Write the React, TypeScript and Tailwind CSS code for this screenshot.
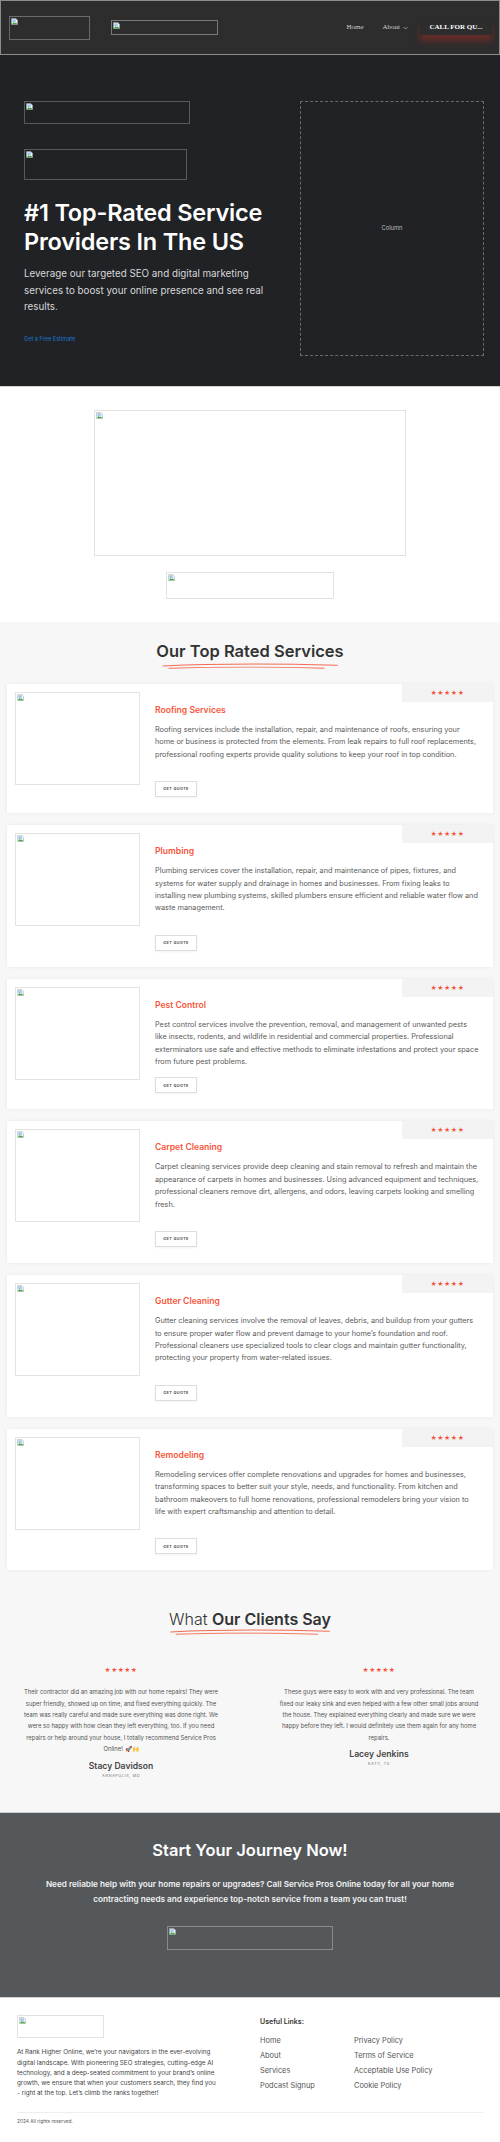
import React from "react";

function BrokenIcon() {
  return (
    <svg width="7" height="7" viewBox="0 0 16 16" className="absolute left-[1px] top-[1px]">
      <path d="M1 1h10l4 4v10H1z" fill="#f4f4f4" stroke="#9a9a9a" strokeWidth="1" />
      <rect x="3" y="3" width="8" height="6" fill="#9cc9ee" />
      <path d="M2 14l4-5 3 3 2-2 4 4z" fill="#3aa84a" />
    </svg>
  );
}

function Img({ className }: { className: string }) {
  return (
    <div className={"relative shrink-0 border " + className}>
      <BrokenIcon />
    </div>
  );
}

function Swoosh({ className }: { className: string }) {
  return (
    <svg viewBox="0 0 180 8" preserveAspectRatio="none" className={className}>
      <path d="M2 4 C 50 1, 120 1, 178 3" stroke="#f36b52" strokeWidth="1.4" fill="none" strokeLinecap="round" />
      <path d="M8 7 C 60 5, 110 5, 165 7" stroke="#f36b52" strokeWidth="1.1" fill="none" strokeLinecap="round" />
    </svg>
  );
}

function Stars({ className }: { className: string }) {
  return <div className={"text-[#f5533d] tracking-[0.5px] leading-none " + className}>★★★★★</div>;
}

const services = [
  {
    title: "Roofing Services",
    text: "Roofing services include the installation, repair, and maintenance of roofs, ensuring your home or business is protected from the elements. From leak repairs to full roof replacements, professional roofing experts provide quality solutions to keep your roof in top condition.",
    btn: "mt-[20px]",
  },
  {
    title: "Plumbing",
    text: "Plumbing services cover the installation, repair, and maintenance of pipes, fixtures, and systems for water supply and drainage in homes and businesses. From fixing leaks to installing new plumbing systems, skilled plumbers ensure efficient and reliable water flow and waste management.",
    btn: "mt-[20px]",
  },
  {
    title: "Pest Control",
    text: "Pest control services involve the prevention, removal, and management of unwanted pests like insects, rodents, and wildlife in residential and commercial properties. Professional exterminators use safe and effective methods to eliminate infestations and protect your space from future pest problems.",
    btn: "mt-[9px]",
  },
  {
    title: "Carpet Cleaning",
    text: "Carpet cleaning services provide deep cleaning and stain removal to refresh and maintain the appearance of carpets in homes and businesses. Using advanced equipment and techniques, professional cleaners remove dirt, allergens, and odors, leaving carpets looking and smelling fresh.",
    btn: "mt-[20px]",
  },
  {
    title: "Gutter Cleaning",
    text: "Gutter cleaning services involve the removal of leaves, debris, and buildup from your gutters to ensure proper water flow and prevent damage to your home’s foundation and roof. Professional cleaners use specialized tools to clear clogs and maintain gutter functionality, protecting your property from water-related issues.",
    btn: "mt-[20px]",
  },
  {
    title: "Remodeling",
    text: "Remodeling services offer complete renovations and upgrades for homes and businesses, transforming spaces to better suit your style, needs, and functionality. From kitchen and bathroom makeovers to full home renovations, professional remodelers bring your vision to life with expert craftsmanship and attention to detail.",
    btn: "mt-[20px]",
  },
];

function ServiceCard({ s }: { s: (typeof services)[number] }) {
  return (
    <div className="relative flex bg-white shadow-[0_0_4px_rgba(0,0,0,0.06)]">
      <div className="absolute right-0 top-0 flex h-[18px] w-[91px] items-center justify-center bg-[#f3f3f3]">
        <Stars className="text-[6px]" />
      </div>
      <div className="pl-[8px] pt-[8px]">
        <Img className="h-[93px] w-[125px] border-[#e3e3e3] bg-white" />
      </div>
      <div className="ml-[15px] w-[324px] pb-[16px] pt-[20px]">
        <div className="text-[8.6px] font-semibold leading-[12px] text-[#f7553a]">{s.title}</div>
        <p className="mt-[8px] text-[7.3px] leading-[12.4px] text-[#5a5a5a]">{s.text}</p>
        <div
          className={
            "flex h-[16px] w-[42px] items-center justify-center border border-[#dddddd] bg-white text-[3.8px] font-bold tracking-[0.4px] text-[#555] shadow-[0_1px_2px_rgba(0,0,0,0.05)] " +
            s.btn
          }
        >
          GET QUOTE
        </div>
      </div>
    </div>
  );
}

export default function App() {
  return (
    <div className="w-[500px] bg-white [font-family:Inter,'Noto_Sans',sans-serif]">
      {/* Header */}
      <header className="flex h-[55px] items-center border border-[#8c8c8c] bg-[#2d2d2d]">
        <Img className="ml-[8px] h-[24px] w-[81px] border-[#6a6a6a]" />
        <Img className="ml-[21px] h-[15px] w-[107px] border-[#7a7a7a]" />
        <nav className="ml-auto mr-[7px] flex items-center [font-family:'Liberation_Serif',serif] text-[7px] text-[#cfcfcf]">
          <span>Home</span>
          <span className="ml-[19px]">About</span>
          <svg width="5" height="4" viewBox="0 0 10 6" className="ml-[3px]">
            <path d="M1 1l4 4 4-4" stroke="#bdbdbd" strokeWidth="1.4" fill="none" />
          </svg>
          <span className="ml-[12px] flex h-[14px] w-[72px] items-center justify-center font-bold text-white shadow-[0_6px_6px_rgba(170,45,35,0.45)]">
            CALL FOR QU...
          </span>
        </nav>
      </header>

      {/* Hero */}
      <section className="flex border-b border-[#d0d0d0] bg-[#202226] pb-[30px] pl-[24px] pr-[16px] pt-[46px]">
        <div className="w-[268px]">
          <Img className="h-[23px] w-[166px] border-[#5a5a5a]" />
          <Img className="mt-[25px] h-[31px] w-[163px] border-[#5a5a5a]" />
          <h1 className="mt-[18px] text-[23.5px] font-semibold leading-[29px] tracking-[-0.2px] text-white">
            #1 Top-Rated Service Providers In The US
          </h1>
          <p className="mt-[10px] w-[250px] text-[9.8px] leading-[16.5px] text-[#d8d8d8]">
            Leverage our targeted SEO and digital marketing services to boost your online presence and see real results.
          </p>
          <div className="mt-[19px] text-[5.6px] text-[#1b74c9]">Get a Free Estimate</div>
        </div>
        <div className="ml-auto flex h-[255px] w-[184px] items-center justify-center border border-dashed border-[#6b6b6b] text-[5.8px] text-[#bdbdbd]">
          Column
        </div>
      </section>

      {/* White images */}
      <section className="flex flex-col items-center pb-[23px] pt-[23px]">
        <Img className="h-[146px] w-[312px] border-[#e2e2e2]" />
        <Img className="mt-[16px] h-[27px] w-[168px] border-[#e2e2e2]" />
      </section>

      {/* Services */}
      <section className="bg-[#f7f7f7] px-[7px] pt-[18px]">
        <div className="flex flex-col items-center">
          <h2 className="text-[16.5px] font-semibold leading-[22px] text-[#333]">Our Top Rated Services</h2>
          <Swoosh className="mt-[1px] h-[6px] w-[178px]" />
        </div>
        <div className="mt-[15px] flex flex-col gap-[12px]">
          {services.map((s) => (
            <ServiceCard key={s.title} s={s} />
          ))}
        </div>

        {/* Testimonials */}
        <div className="mt-[38px] flex flex-col items-center">
          <h2 className="text-[16px] leading-[22px] text-[#333]">
            <span className="font-light">What </span>
            <span className="font-semibold">Our Clients Say</span>
          </h2>
          <Swoosh className="-mt-[1px] h-[6px] w-[162px]" />
        </div>
        <div className="mt-[32px] grid grid-cols-2 gap-[30px] pb-[34px] text-center">
          <div className="flex flex-col items-center px-[12px]">
            <Stars className="text-[5.8px]" />
            <p className="mt-[13px] text-[5.9px] leading-[11.4px] text-[#555]">
              Their contractor did an amazing job with our home repairs! They were super friendly, showed up on time, and fixed everything quickly. The team was really careful and made sure everything was done right. We were so happy with how clean they left everything, too. If you need repairs or help around your house, I totally recommend Service Pros Online! 🚀🙌
            </p>
            <div className="mt-[5px] text-[8.6px] font-semibold leading-[12px] text-[#444]">Stacy Davidson</div>
            <div className="mt-[1px] text-[3.8px] tracking-[0.6px] text-[#777]">ANNAPOLIS, MD</div>
          </div>
          <div className="flex flex-col items-center px-[12px]">
            <Stars className="text-[5.8px]" />
            <p className="mt-[13px] text-[5.9px] leading-[11.4px] text-[#555]">
              These guys were easy to work with and very professional. The team fixed our leaky sink and even helped with a few other small jobs around the house. They explained everything clearly and made sure we were happy before they left. I would definitely use them again for any home repairs.
            </p>
            <div className="mt-[5px] text-[8.6px] font-semibold leading-[12px] text-[#444]">Lacey Jenkins</div>
            <div className="mt-[1px] text-[3.8px] tracking-[0.6px] text-[#777]">KATY, TX</div>
          </div>
        </div>
      </section>

      {/* CTA */}
      <section className="flex flex-col items-center border-y border-[#cfcfcf] bg-[#55585b] pb-[47px] pt-[25px] text-center">
        <h2 className="text-[16.5px] font-semibold leading-[24px] text-white">Start Your Journey Now!</h2>
        <p className="mt-[15px] w-[426px] text-[8.2px] font-semibold leading-[14.5px] text-[#f2f2f2]">
          Need reliable help with your home repairs or upgrades? Call Service Pros Online today for all your home contracting needs and experience top-notch service from a team you can trust!
        </p>
        <Img className="mt-[20px] h-[24px] w-[166px] border-[#8a8a8a]" />
      </section>

      {/* Footer */}
      <footer className="px-[17px] pt-[17px]">
        <div className="flex">
          <div className="w-[200px]">
            <Img className="h-[23px] w-[87px] border-[#e2e2e2]" />
            <p className="mt-[9px] text-[6.3px] leading-[10.3px] text-[#444]">
              At Rank Higher Online, we’re your navigators in the ever-evolving digital landscape. With pioneering SEO strategies, cutting-edge AI technology, and a deep-seated commitment to your brand’s online growth, we ensure that when your customers search, they find you - right at the top. Let’s climb the ranks together!
            </p>
          </div>
          <div className="ml-[43px] pt-[2px]">
            <div className="text-[7px] font-semibold leading-[10px] text-[#333]">Useful Links:</div>
            <div className="mt-[9px] grid grid-cols-[94px_auto] gap-y-[5px] text-[7.4px] leading-[10px] text-[#555]">
              <span>Home</span>
              <span>Privacy Policy</span>
              <span>About</span>
              <span>Terms of Service</span>
              <span>Services</span>
              <span>Acceptable Use Policy</span>
              <span>Podcast Signup</span>
              <span>Cookie Policy</span>
            </div>
          </div>
        </div>
        <div className="mt-[13px] border-t border-[#eeeeee] pb-[16px] pt-[4px] text-[4.8px] leading-[8px] text-[#555]">
          2024 All rights reserved.
        </div>
      </footer>
    </div>
  );
}
